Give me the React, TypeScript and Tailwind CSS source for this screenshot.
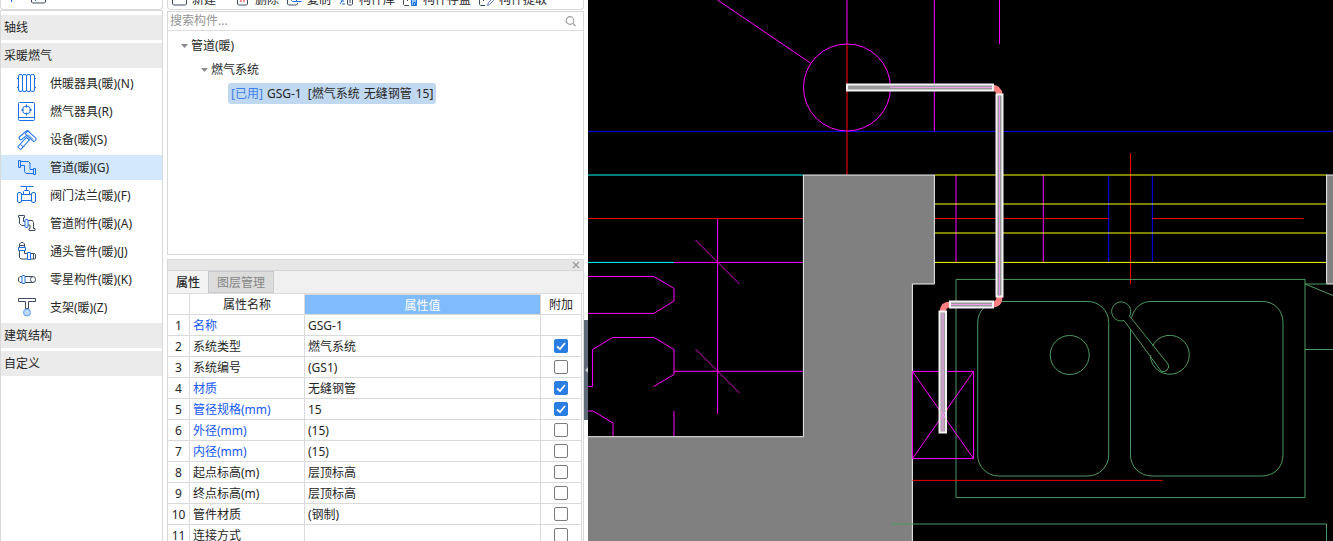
import type { ReactNode } from "react";

type ComponentItem = {
  label: string;
  icon: ReactNode;
};

type PropertyRow = {
  name: string;
  value: string;
  highlighted?: boolean;
  extra?: boolean;
};

const BLUE = "#1a6fe6";
const SLATE = "#3f4a63";

const componentItems: ComponentItem[] = [
  {
    label: "供暖器具(暖)(N)",
    icon: (
      <g stroke={BLUE}>
        <rect x="2.5" y="1.5" width="4" height="17" rx="1.5" />
        <rect x="6.5" y="1.5" width="4" height="17" rx="1.5" />
        <rect x="10.5" y="1.5" width="4" height="17" rx="1.5" />
        <rect x="14.5" y="1.5" width="4" height="17" rx="1.5" />
        <path d="M1 5.5h1.5M1 14.5h1.5M18.5 5.5H20M18.5 14.5H20" />
      </g>
    ),
  },
  {
    label: "燃气器具(R)",
    icon: (
      <g stroke={BLUE}>
        <rect x="2.5" y="1.5" width="16" height="18" rx="1" />
        <path d="M2.5 16.5h16" />
        <circle cx="10.5" cy="9" r="4" />
        <path d="M10.5 3.5v3M10.5 11.5v3M5 9h3M13 9h3" />
      </g>
    ),
  },
  {
    label: "设备(暖)(S)",
    icon: (
      <g stroke={BLUE} fill="#fff">
        <rect x="1" y="12.500" width="13" height="4" rx="1" transform="rotate(-48 7.5 14.5)" />
        <path d="M4.500 15.500 7 17.500" />
        <rect x="2" y="4.500" width="12" height="3.500" rx="1.500" transform="rotate(-40 8 6)" />
        <rect x="9" y="5" width="12" height="4" rx="1.500" transform="rotate(42 14.500 7)" />
        <path d="m9.500 7.500 4.500 4M12 5.500l5 5" />
      </g>
    ),
  },
  {
    label: "管道(暖)(G)",
    icon: (
      <g stroke={BLUE}>
        <path d="M2.5 3.5h2v7h-2zM17.5 11.5h2v6h-2zM4.5 4.500h8l1.500 1.500v6.500h3.500M4.5 8.500h4v6l1.500 2h7.500" />
      </g>
    ),
  },
  {
    label: "阀门法兰(暖)(F)",
    icon: (
      <g stroke={BLUE}>
        <path d="M4.5 1.5h13M10.5 1.5v4M7.5 9.5v-3l1-1h4l1 1v3M5.5 9.5h10M5.5 15.5h10" />
        <rect x="1.5" y="7.5" width="4" height="10" rx="1.5" />
        <rect x="15.5" y="7.5" width="4" height="10" rx="1.5" />
      </g>
    ),
  },
  {
    label: "管道附件(暖)(A)",
    icon: (
      <g stroke={SLATE}>
        <path d="M2.5 2.5h6v2h-1v4H9M3.500 4.500v6l2 2H9M2.5 2.5v2h1M12 7.5h4.500l1 2v6h1.500v2h-6v-2h1v-3.500H12" />
        <rect x="9" y="6.500" width="3" height="8" rx="1" stroke={BLUE} />
      </g>
    ),
  },
  {
    label: "通头管件(暖)(J)",
    icon: (
      <g stroke={SLATE}>
        <path d="M3.5 6.5V3l1.500-1.500h2L8.500 3v3.500M3.5 9.5v7l1.500 1.500h6.500M8.5 9.5v3h3M14.5 12.5h4l1 1v4l-1 .5h-4M17.500 13v5M4 4.500h4" />
        <path d="M2.5 6.5h7v3h-7zM11.500 11.500h3v7h-3z" stroke={BLUE} />
      </g>
    ),
  },
  {
    label: "零星构件(暖)(K)",
    icon: (
      <g stroke={SLATE}>
        <path d="M6 7.5H4L2.500 9v3L4 13.5h2M9 7.5h8M9 13.5h8" />
        <ellipse cx="17" cy="10.5" rx="2.500" ry="3" />
        <rect x="6" y="6.5" width="3" height="8" rx="1" stroke={BLUE} />
      </g>
    ),
  },
  {
    label: "支架(暖)(Z)",
    icon: (
      <g stroke={SLATE}>
        <path d="M2.5 1.5h17v3h-7v7h-3v-7h-7z" />
        <circle cx="11" cy="15.500" r="3.500" fill="#bcd9fb" stroke="#5b9bf0" />
      </g>
    ),
  },
];

const toolbarItems: ComponentItem[] = [
  {
    label: "新建",
    icon: <path d="M.5 0v12l1 1h12l1-1V0" stroke={SLATE} />,
  },
  {
    label: "删除",
    icon: (
      <g stroke={SLATE}>
        <path d="M2.5 0v12l1 1h8l1-1V0" />
        <path d="M6 4v6M9 4v6" stroke="#e02020" />
      </g>
    ),
  },
  {
    label: "复制",
    icon: (
      <g stroke={SLATE}>
        <path d="M.5 0v12l1 1h8l1-1v-1" />
        <path d="M4.5 0v8.500l1 1h9M9.500 5v5" stroke={BLUE} />
      </g>
    ),
  },
  {
    label: "构件库",
    icon: (
      <g stroke={BLUE}>
        <path d="m1 12 3-5M3 12h3M2 9h3" />
        <path d="M8.5 2v10l1 1h3l1-1V2M11 6v5" stroke={SLATE} />
      </g>
    ),
  },
  {
    label: "构件存盘",
    icon: (
      <g stroke={SLATE}>
        <path d="M6 13.5H1.500l-1-1V0M4.500 4v5" />
        <path d="M8.500 5.500h5v8h-5zM10.500 13v-2.500h2V13" stroke={BLUE} fill="#9cc5fa" />
      </g>
    ),
  },
  {
    label: "构件提取",
    icon: (
      <g stroke={SLATE}>
        <path d="M6 13.5H1.500l-1-1V0M4.500 4v5" />
        <path d="m8.500 13.500 1-3 4-4 1 2-4 4z" stroke="#5b7fb5" />
      </g>
    ),
  },
];

const propertyRows: PropertyRow[] = [
  { name: "名称", value: "GSG-1", highlighted: true },
  { name: "系统类型", value: "燃气系统", extra: true },
  { name: "系统编号", value: "(GS1)", extra: false },
  { name: "材质", value: "无缝钢管", highlighted: true, extra: true },
  { name: "管径规格(mm)", value: "15", highlighted: true, extra: true },
  { name: "外径(mm)", value: "(15)", highlighted: true, extra: false },
  { name: "内径(mm)", value: "(15)", highlighted: true, extra: false },
  { name: "起点标高(m)", value: "层顶标高", extra: false },
  { name: "终点标高(m)", value: "层顶标高", extra: false },
  { name: "管件材质", value: "(钢制)", extra: false },
  { name: "连接方式", value: "", extra: false },
];

function CategoryButton({ label }: { label: string }) {
  return (
    <button type="button" className="h-[25px] shrink-0 bg-[#ebebeb] px-[3px] text-left">
      {label}
    </button>
  );
}

function Sidebar() {
  return (
    <aside className="flex w-[163px] shrink-0 flex-col">
      <div className="flex h-[10px] shrink-0 items-end gap-[14px] overflow-hidden rounded-b border-x border-b border-[#d9d9d9] pb-[5px] pl-1">
        <svg viewBox="0 0 12 12" className="h-3 w-3 shrink-0" fill="none" stroke={BLUE} aria-hidden="true">
          <path d="M6.5 0v10M1 5.500h11" />
        </svg>
        <svg viewBox="0 0 16 14" className="h-[14px] w-4 shrink-0" fill="none" stroke={SLATE} aria-hidden="true">
          <path d="M.5 0v12l1 1h12l1-1V0" />
          <path d="M4.5 11V9.500h4" stroke={BLUE} />
        </svg>
      </div>
      <nav className="flex min-h-0 flex-1 flex-col gap-[3px] overflow-hidden border-x border-t border-[#d9d9d9] pt-1">
        <CategoryButton label="轴线" />
        <CategoryButton label="采暖燃气" />
        {componentItems.map((item) => (
          <button
            key={item.label}
            type="button"
            className={
              item.label.startsWith("管道(")
                ? "flex h-[25px] shrink-0 items-center gap-[13px] bg-[#d3e7fd] pl-[15px]"
                : "flex h-[25px] shrink-0 items-center gap-[13px] pl-[15px]"
            }
          >
            <svg viewBox="0 0 21 21" className="h-[21px] w-[21px]" fill="none" aria-hidden="true">
              {item.icon}
            </svg>
            {item.label}
          </button>
        ))}
        <CategoryButton label="建筑结构" />
        <CategoryButton label="自定义" />
      </nav>
    </aside>
  );
}

function Toolbar() {
  return (
    <div className="flex h-[10px] shrink-0 items-end gap-2 overflow-hidden rounded-b border-x border-b border-[#d9d9d9] pb-[3px] pl-1">
      {toolbarItems.map((item) => (
        <button
          key={item.label}
          type="button"
          className="flex shrink-0 items-end gap-[5px] leading-[13px] first:mr-[11px]"
        >
          <svg viewBox="0 0 15 14" className="h-[14px] w-[15px]" fill="none" aria-hidden="true">
            {item.icon}
          </svg>
          {item.label}
        </button>
      ))}
    </div>
  );
}

function Caret() {
  return (
    <svg viewBox="0 0 7 4" className="h-1 w-[7px]" fill="#8a8a8a" aria-hidden="true">
      <path d="M0 0h7L3.5 4z" />
    </svg>
  );
}

function ComponentTree() {
  return (
    <section className="mt-px flex h-[244px] shrink-0 flex-col border border-[#d9d9d9]">
      <label className="flex h-[19px] shrink-0 items-center border-b border-[#dedede] pl-[2px] pr-[6px]">
        <input
          type="text"
          aria-label="搜索构件"
          placeholder="搜索构件..."
          className="h-4 min-w-0 flex-1 outline-none placeholder:text-[#949494]"
        />
        <svg viewBox="0 0 12 12" className="h-3 w-3" fill="none" stroke="#a0a0a0" strokeWidth="1.2" aria-hidden="true">
          <circle cx="5" cy="5.500" r="3.800" />
          <path d="m8 8.500 2.500 2.500" />
        </svg>
      </label>
      <ul className="pt-[3px] leading-6">
        <li>
          <span className="flex items-center gap-[3px] pl-[13px]">
            <Caret />
            管道(暖)
          </span>
          <ul>
            <li>
              <span className="flex items-center gap-[3px] pl-[33px]">
                <Caret />
                燃气系统
              </span>
              <ul>
                <li className="flex pl-[60px] pt-px">
                  <span className="flex gap-1 rounded-[3px] bg-[#c1d8f1] px-[3px] leading-[21px]">
                    <span className="text-[#3f7fe8]">[已用]</span>
                    <span>GSG-1</span>
                    <span className="pl-0.5">[燃气系统</span>
                    <span>无缝钢管</span>
                    <span>15]</span>
                  </span>
                </li>
              </ul>
            </li>
          </ul>
        </li>
      </ul>
    </section>
  );
}

function ExtraCheckbox({ name, checked }: { name: string; checked: boolean }) {
  return (
    <label className="relative mx-auto block h-[14px] w-[14px]">
      <input
        type="checkbox"
        aria-label={name}
        defaultChecked={checked}
        className="peer block h-full w-full appearance-none rounded-[2px] border border-[#7a7a7a] bg-white checked:border-[#2a7de1] checked:bg-[#2a7de1]"
      />
      <svg
        viewBox="0 0 14 14"
        className="pointer-events-none absolute inset-0 hidden peer-checked:block"
        fill="none"
        stroke="#fff"
        strokeWidth="1.8"
        aria-hidden="true"
      >
        <path d="m3 7.500 3 2.500 5-6" />
      </svg>
    </label>
  );
}

function PropertyPanel() {
  return (
    <section className="mt-1 min-h-0 flex-1 overflow-hidden border-x border-t border-[#d9d9d9]">
      <div className="flex h-[11px] items-center justify-end border-b border-[#d5d5d5] bg-[#e7e7e7] pr-[3px]">
        <button type="button" aria-label="关闭">
          <svg viewBox="0 0 8 8" className="h-2 w-2" fill="none" stroke="#999" strokeWidth="1.3" aria-hidden="true">
            <path d="m1 1 6 6M7 1 1 7" />
          </svg>
        </button>
      </div>
      <div role="tablist" className="flex h-[23px] border-b border-[#dcdcdc] bg-[#f0f0f0]">
        <button
          type="button"
          role="tab"
          aria-selected="true"
          className="w-[41px] border-r border-[#c2c7cc] bg-[#f3f3f3] pt-0.5 font-medium"
        >
          属性
        </button>
        <button
          type="button"
          role="tab"
          aria-selected="false"
          className="w-[65px] border border-l-0 border-[#c8ccd0] bg-[#dcdcdc] pt-0.5 text-[#858585]"
        >
          图层管理
        </button>
      </div>
      <div className="pr-px">
        <table className="w-full table-fixed border-separate border-spacing-0">
          <thead>
            <tr className="h-[21px] *:border-b *:border-r *:border-[#dadada] *:p-0 *:pt-0.5 *:font-normal">
              <th className="w-[22px]" aria-label="序号" />
              <th className="w-[115px]">属性名称</th>
              <th className="border-t border-t-[#63a5ea] bg-[#80bbfb] text-white">属性值</th>
              <th className="w-[41px]">附加</th>
            </tr>
          </thead>
          <tbody>
            {propertyRows.map((row, index) => (
              <tr
                key={row.name}
                className="h-[21px] *:whitespace-nowrap *:border-b *:border-r *:border-[#dadada] *:pb-0"
              >
                <td className="px-0 pt-0.5 text-center">{index + 1}</td>
                <td className={row.highlighted ? "px-[3px] pt-0.5 text-[#1457f5]" : "px-[3px] pt-0.5"}>
                  {row.name}
                </td>
                <td className="px-[3px] pt-0.5">{row.value}</td>
                <td className="px-0 pt-0">
                  {row.extra !== undefined && <ExtraCheckbox name={row.name} checked={row.extra} />}
                </td>
              </tr>
            ))}
          </tbody>
        </table>
      </div>
    </section>
  );
}

function Pipe({ x, y, width, height }: { x: number; y: number; width: number; height: number }) {
  return <rect x={x} y={y} width={width} height={height} fill="#999" stroke="#f4f4f4" strokeWidth="2" />;
}

function Drawing() {
  return (
    <svg
      viewBox="588 0 745 541"
      preserveAspectRatio="xMinYMin slice"
      className="block h-full w-full"
      fill="none"
      role="img"
      aria-label="绘图区"
    >
      <g stroke="#0000ff">
        <path d="M588 131.4h745M1108.7 175v87M1152.3 175v87" />
      </g>
      <g stroke="#ff00ff">
        <path d="m717.5 0 93 63M847 0v44M934.3 0v131M999.5 0v44" />
        <circle cx="847" cy="87.5" r="43.5" />
        <path d="M717.6 218v196M674 262.4h129.500M674 371.3h129.500" />
        <path d="m695.5 240 44 44M695.500 349l44 44" strokeOpacity=".85" />
        <path d="M588 276.5h66l20 12V301l-20 12.400h-66" />
        <path d="M588 386.5h4.600v-37l20-12H654l20 12v25l-20.500 12" />
        <path d="M588 411h5l20 12v13.500M674 411v25.500" />
        <path d="M956 175v87M1043.3 175v87" />
      </g>
      <g stroke="#00ffff">
        <path d="M588 175h215.500M588 262.4h86" />
      </g>
      <g stroke="#ff0000">
        <path d="M847 44v131M588 218.5h215.500M934.5 218.5h174M1152.5 218.5h151M1130.5 153v131" />
      </g>
      <g stroke="#ffff00">
        <path d="M934.5 175H1327M934.5 204H1327M934.5 233H1327M934.5 262.4H1327" />
      </g>

      {/* walls */}
      <g fill="#808080" stroke="#f0f0f0">
        <path d="M587 436.7h216.400V175h131v109h-22v258H587z" />
        <path d="M1326.6 175h8v109h-8z" />
      </g>

      {/* kitchen sink and worktop */}
      <g stroke="#4d9962">
        <path d="M956 279.4h349v218.200H956z" />
        <rect x="977.7" y="301.5" width="131" height="174.5" rx="21" />
        <path d="M1131.5 317.500c3-10 10-16 19.500-16h111.500c12 0 20.500 9 20.500 21V455c0 12-9 21-21 21h-110c-12 0-21.500-9-21.500-21V329.500" />
        <circle cx="1069.7" cy="355" r="19.5" />
        <path d="M1152.3 346.200A19.5 19.5 0 1 1 1150.300 355" />
        <path d="M1124 320.500A9.500 9.500 0 1 1 1129.500 316l38.500 48q2 3-1 6-3 3-6 1z" />
        <path d="M1305 284h22M1305 284l28 11.500M1305 349.500h28M891 524h435.500v17" />
      </g>
      <path d="M912.5 480.4h250" stroke="#ff0000" strokeOpacity=".9" />
      <path d="M912.5 371.4h61v87.200h-61zl61 87.200M973.5 371.4l-61 87.200" stroke="#ff00ff" />

      {/* gas pipe run */}
      <g stroke="#ff8080" strokeWidth="6">
        <path d="M992 87.500q7 .5 7.500 7.500M999.500 296.500q0 8-7.500 8M950 304.500q-7 0-7.500 7.500" />
      </g>
      <Pipe x={847} y={84.5} width={146} height={6} />
      <Pipe x={996.5} y={94.5} width={6} height={202} />
      <Pipe x={950} y={301.5} width={43} height={6} />
      <Pipe x={939.5} y={311.5} width={6.5} height={121} />
      <g stroke="#ee99ee">
        <path d="M890 87.5h102M999.5 96v200M951 304.5h41" />
        <path d="M942.7 313v118" stroke="#c8a0c8" strokeWidth="3" />
        <path d="m940.5 411 5 7.500M945.5 411l-5 7.500" />
      </g>
    </svg>
  );
}

export default function App() {
  return (
    <main className="flex h-screen overflow-hidden bg-white font-['Noto_Sans','Noto_Sans_CJK_SC',sans-serif] text-[12px] leading-4 text-[#262626]">
      <Sidebar />
      <div className="ml-1 flex w-[417px] shrink-0 flex-col">
        <Toolbar />
        <ComponentTree />
        <PropertyPanel />
      </div>
      <div className="w-1 shrink-0 pt-80">
        <button
          type="button"
          aria-label="收起面板"
          className="flex h-[100px] w-full items-center justify-center bg-[#5f6b78]"
        >
          <svg viewBox="0 0 4 6" className="h-[6px] w-1" fill="#c4cad0" aria-hidden="true">
            <path d="M4 0v6L1 3z" />
          </svg>
        </button>
      </div>
      <div className="min-w-0 flex-1 bg-black">
        <Drawing />
      </div>
    </main>
  );
}
